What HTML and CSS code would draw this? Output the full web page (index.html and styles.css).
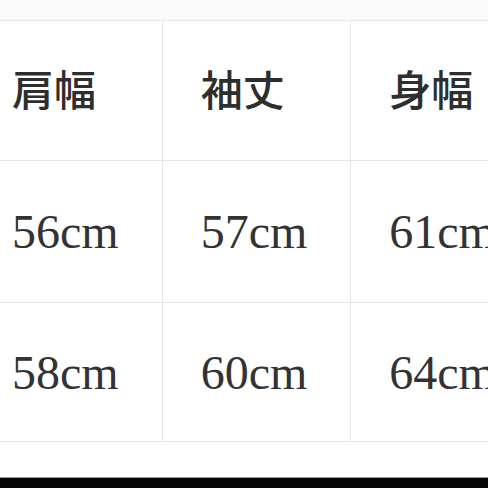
FILE: index.html
```html
<!DOCTYPE html>
<html lang="ja">
<head>
<meta charset="utf-8">
<link rel="stylesheet" href="styles.css">
</head>
<body>
<div class="page">
  <div class="frame">
    <table class="sizes">
      <tr class="head">
        <td>肩幅</td>
        <td>袖丈</td>
        <td>身幅</td>
      </tr>
      <tr class="mid">
        <td>56cm</td>
        <td>57cm</td>
        <td>61cm</td>
      </tr>
      <tr class="last">
        <td>58cm</td>
        <td>60cm</td>
        <td>64cm</td>
      </tr>
    </table>
  </div>
  <div class="bar"></div>
</div>
</body>
</html>
```
FILE: styles.css
```css
html, body {
  margin: 0;
  padding: 0;
  background: #ffffff;
}
.page {
  width: 488px;
  height: 488px;
  overflow: hidden;
  display: flex;
  flex-direction: column;
  background: #ffffff;
}
.frame {
  padding-top: 20px;
  height: 477px;
  flex: none;
  box-sizing: border-box;
  overflow: hidden;
  background: linear-gradient(#fafafa 0 20px, #ffffff 20px);
}
.sizes {
  border-collapse: collapse;
  margin-left: -27px;
  width: 567px;
  table-layout: fixed;
  background: #ffffff;
}
.sizes td {
  border: 1px solid #e6e6e6;
  height: 140px;
  padding: 0 0 0 38px;
  box-sizing: border-box;
  vertical-align: middle;
  font-family: "Liberation Serif", "Noto Sans CJK JP", serif;
  font-size: 48px;
  color: #333333;
  white-space: nowrap;
  overflow: hidden;
}
.sizes .mid td {
  height: 142px;
}
.sizes .last td {
  height: 139px;
}
.sizes .head td {
  font-family: "Noto Sans CJK JP", sans-serif;
  font-size: 42px;
  font-weight: 500;
  color: #2e2e2e;
  padding-bottom: 6px;
}
.bar {
  flex: 1;
  background: #050505;
  border-top: 1px solid #9a9a9a;
}
```
